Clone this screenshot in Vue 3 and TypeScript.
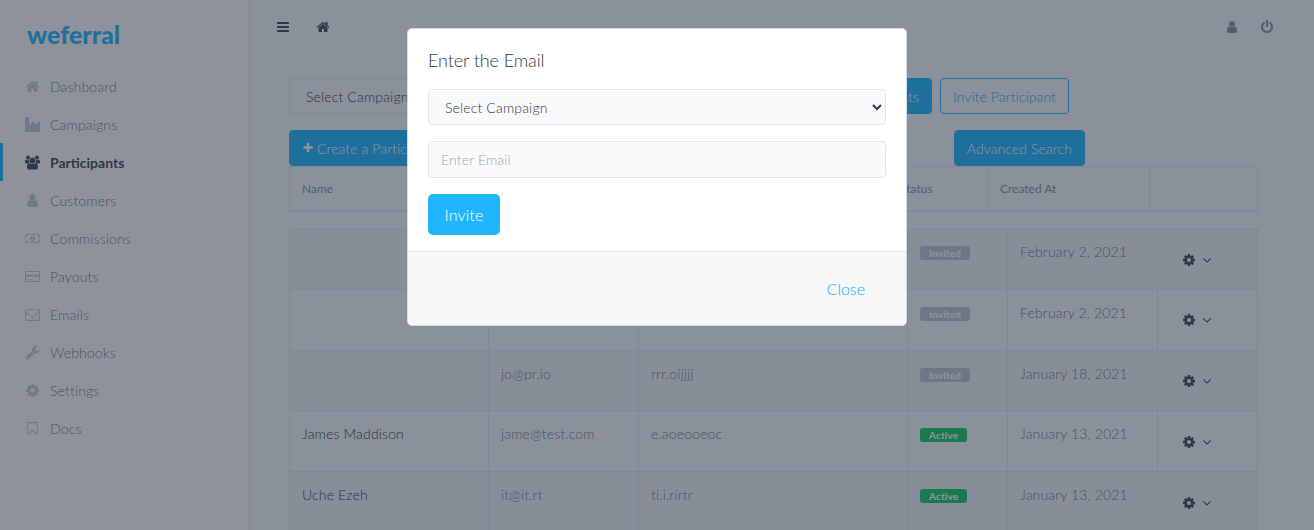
<script setup lang="ts">
const icons: Record<string, { box: string; d: string }> = {
  home: { box: '0 0 1792 1792', d: 'M1472 992v480q0 26-19 45t-45 19h-384v-384h-256v384h-384q-26 0-45-19t-19-45v-480q0-1 .5-3t.5-3l575-474 575 474q1 2 1 6zm223-69l-62 74q-8 9-21 11h-3q-13 0-21-7l-692-577-692 577q-12 8-24 7-13-2-21-11l-62-74q-8-10-7-23.500t11-21.500l719-599q32-26 76-26t76 26l244 204v-195q0-14 9-23t23-9h192q14 0 23 9t9 23v408l219 182q10 8 11 21.500t-7 23.500z' },
  industry: { box: '0 0 1792 1792', d: 'M448 0q26 0 45 19t19 45v891l536-429q17-14 40-14 26 0 45 19t19 45v379l536-429q17-14 40-14 26 0 45 19t19 45v1152q0 26-19 45t-45 19h-1664q-26 0-45-19t-19-45v-1664q0-26 19-45t45-19h384z' },
  users: { box: '0 0 1920 1792', d: 'M593 896q-162 5-265 128h-134q-82 0-138-40.500t-56-118.500q0-353 124-353 6 0 43.500 21t97.500 42.500 119 21.500q67 0 133-23-5 37-5 66 0 139 81 256zm1071 637q0 120-73 189.500t-194 69.500h-874q-121 0-194-69.500t-73-189.500q0-53 3.500-103.500t14-109 26.500-108.500 43-97.500 62-81 85.500-53.500 111.500-20q10 0 43 21.500t73 48 107 48 135 21.500 135-21.500 107-48 73-48 43-21.500q61 0 111.500 20t85.500 53.500 62 81 43 97.500 26.500 108.500 14 109 3.500 103.500zm-1024-1277q0 106-75 181t-181 75-181-75-75-181 75-181 181-75 181 75 75 181zm704 384q0 159-112.500 271.500t-271.500 112.500-271.500-112.500-112.500-271.500 112.500-271.500 271.500-112.500 271.500 112.500 112.500 271.500zm576 225q0 78-56 118.500t-138 40.500h-134q-103-123-265-128 81-117 81-256 0-29-5-66 66 23 133 23 59 0 119-21.500t97.500-42.500 43.500-21q124 0 124 353zm-128-609q0 106-75 181t-181 75-181-75-75-181 75-181 181-75 181 75 75 181z' },
  user: { box: '0 0 1792 1792', d: 'M1536 1399q0 109-62.500 187t-150.500 78h-854q-88 0-150.500-78t-62.500-187q0-85 8.500-160.500t31.500-152 58.500-131 94-89 134.500-34.500q131 128 313 128t313-128q76 0 134.500 34.500t94 89 58.500 131 31.500 152 8.500 160.500zm-256-887q0 159-112.500 271.500t-271.500 112.500-271.500-112.500-112.500-271.500 112.500-271.500 271.500-112.500 271.500 112.500 112.500 271.500z' },
  money: { box: '0 0 1920 1792', d: 'M160 320h1600q40 0 68 28t28 68v960q0 40-28 68t-68 28h-1600q-40 0-68-28t-28-68v-960q0-40 28-68t68-28zm160 128q0 106-75 181t-117 75v384q42 0 117 75t75 181h1280q0-106 75-181t117-75v-384q-42 0-117-75t-75-181zm640 96q133 0 226.500 103.500t93.500 248.500-93.500 248.500-226.500 103.500-226.500-103.500-93.500-248.500 93.500-248.500 226.500-103.500zm-128 160v64h64v256h-64v64h192v-64h-64v-320z' },
  card: { box: '0 0 1920 1792', d: 'M160 192h1600q66 0 113 47t47 113v1088q0 66-47 113t-113 47h-1600q-66 0-113-47t-47-113v-1088q0-66 47-113t113-47zm-32 480h1664v-320q0-13-9.500-22.500t-22.500-9.500h-1600q-13 0-22.500 9.500t-9.500 22.500zm0 224v544q0 13 9.500 22.500t22.500 9.500h1600q13 0 22.500-9.500t9.500-22.500v-544zm128 352h256v128h-256zm384 0h384v128h-384z' },
  envelope: { box: '0 0 1792 1792', d: 'M1664 1504v-768q-32 36-69 66-268 206-426 338-51 43-83 67t-86.500 48.500-102.500 24.500h-2q-48 0-102.500-24.500t-86.500-48.500-83-67q-158-132-426-338-37-30-69-66v768q0 13 9.500 22.500t22.500 9.500h1472q13 0 22.500-9.500t9.500-22.500zm0-1051v-24.500l-.5-13-3-12.500-5.500-9-9-7.500-14-2.500h-1472q-13 0-22.500 9.500t-9.500 22.500q0 168 147 284 193 152 401 317 6 5 35 29.500t46 37.500 44.500 31.500 50.500 27.500 43 9h2q20 0 43-9t50.500-27.500 44.500-31.500 46-37.500 35-29.500q208-165 401-317 54-43 100.500-115.500t46.500-131.500zm128-37v1088q0 66-47 113t-113 47h-1472q-66 0-113-47t-47-113v-1088q0-66 47-113t113-47h1472q66 0 113 47t47 113z' },
  wrench: { box: '0 0 1792 1792', d: 'M448 1472q0-26-19-45t-45-19-45 19-19 45 19 45 45 19 45-19 19-45zm644-420l-682 682q-37 37-90 37-52 0-91-37l-106-108q-38-36-38-90 0-53 38-91l681-681q39 98 114.500 173.500t173.500 114.500zm634-435q0 39-23 106-47 134-164.500 217.500t-258.500 83.500q-185 0-316.500-131.500t-131.500-316.500 131.500-316.500 316.500-131.500q58 0 121.500 16.500t107.500 46.500q16 11 16 28t-16 28l-293 169v224l193 107q5-3 79-48.500t135.500-81 70.500-35.500q15 0 23.500 10t8.500 25z' },
  cog: { box: '0 0 1792 1792', d: 'M1152 896q0-106-75-181t-181-75-181 75-75 181 75 181 181 75 181-75 75-181zm512-109v222q0 12-8 23t-20 13l-185 28q-19 54-39 91 35 50 107 138 10 12 10 25t-9 23q-27 37-99 108t-94 71q-12 0-26-9l-138-108q-44 23-91 38-16 136-29 186-7 28-36 28h-222q-14 0-24.500-8.500t-11.500-21.500l-28-184q-49-16-90-37l-141 107q-10 9-25 9-14 0-25-11-126-114-165-168-7-10-7-23 0-12 8-23 15-21 51-66.500t54-70.500q-27-50-41-99l-183-27q-13-2-21-12.500t-8-23.500v-222q0-12 8-23t19-13l186-28q14-46 39-92-40-57-107-138-10-12-10-24 0-10 9-23 26-36 98.500-107.500t94.500-71.500q13 0 26 10l138 107q44-23 91-38 16-136 29-186 7-28 36-28h222q14 0 24.500 8.500t11.500 21.500l28 184q49 16 90 37l142-107q9-9 24-9 13 0 25 10 129 119 165 170 7 8 7 22 0 12-8 23-15 21-51 66.500t-54 70.500q26 50 41 98l183 28q13 2 21 12.500t8 23.500z' },
  bookmark: { box: '0 0 1792 1792', d: 'M1408 256h-1024v1242l429-412 83-80 83 80 429 412zm12-128q23 0 44 9 33 13 52.500 41t19.500 62v1289q0 34-19.500 62t-52.500 41q-19 8-44 8-48 0-83-32l-441-424-441 424q-36 33-83 33-23 0-44-9-33-13-52.500-41t-19.500-62v-1289q0-34 19.500-62t52.500-41q21-9 44-9z' },
  bars: { box: '0 0 1792 1792', d: 'M1664 1344v128q0 26-19 45t-45 19h-1408q-26 0-45-19t-19-45v-128q0-26 19-45t45-19h1408q26 0 45 19t19 45zm0-512v128q0 26-19 45t-45 19h-1408q-26 0-45-19t-19-45v-128q0-26 19-45t45-19h1408q26 0 45 19t19 45zm0-512v128q0 26-19 45t-45 19h-1408q-26 0-45-19t-19-45v-128q0-26 19-45t45-19h1408q26 0 45 19t19 45z' },
  plus: { box: '0 0 1792 1792', d: 'M1600 736v192q0 40-28 68t-68 28h-416v416q0 40-28 68t-68 28h-192q-40 0-68-28t-28-68v-416h-416q-40 0-68-28t-28-68v-192q0-40 28-68t68-28h416v-416q0-40 28-68t68-28h192q40 0 68 28t28 68v416h416q40 0 68 28t28 68z' },
  power: { box: '0 0 1792 1792', d: 'M1664 896q0 156-61 298t-164 245-245 164-298 61-298-61-245-164-164-245-61-298q0-182 80.500-343t226.500-270q43-32 95.500-25t83.500 50q32 42 24.500 94.500t-49.500 84.500q-98 74-151.500 181t-53.500 228q0 104 40.500 198.500t109.500 163.500 163.500 109.500 198.500 40.500 198.500-40.500 163.500-109.500 109.500-163.500 40.500-198.500q0-121-53.500-228t-151.500-181q-42-32-49.500-84.500t24.500-94.500q31-43 84-50t95 25q146 109 226.500 270t80.500 343zm-640-768v640q0 52-38 90t-90 38-90-38-38-90v-640q0-52 38-90t90-38 90 38 38 90z' },
  angle: { box: '0 0 1792 1792', d: 'M1395 736q0 13-10 23l-466 466q-10 10-23 10t-23-10l-466-466q-10-10-10-23t10-23l50-50q10-10 23-10t23 10l393 393 393-393q10-10 23-10t23 10l50 50q10 10 10 23z' },
}

const nav = [
  { label: 'Dashboard', icon: 'home' },
  { label: 'Campaigns', icon: 'industry' },
  { label: 'Participants', icon: 'users', active: true },
  { label: 'Customers', icon: 'user' },
  { label: 'Commissions', icon: 'money' },
  { label: 'Payouts', icon: 'card' },
  { label: 'Emails', icon: 'envelope' },
  { label: 'Webhooks', icon: 'wrench' },
  { label: 'Settings', icon: 'cog' },
  { label: 'Docs', icon: 'bookmark' },
]

const rows = [
  { name: '', email: '', code: '', status: 'Invited', created: 'February 2, 2021' },
  { name: '', email: '', code: '', status: 'Invited', created: 'February 2, 2021' },
  { name: '', email: 'jo@pr.io', code: 'rrr.oijjjj', status: 'Invited', created: 'January 18, 2021' },
  { name: 'James Maddison', email: 'jame@test.com', code: 'e.aoeooeoc', status: 'Active', created: 'January 13, 2021' },
  { name: 'Uche Ezeh', email: 'it@it.rt', code: 'ti.i.rirtr', status: 'Active', created: 'January 13, 2021' },
]
</script>

<template>
  <div class="app">
    <aside class="sidebar">
      <div class="logo">weferral</div>
      <nav class="nav">
        <a v-for="item in nav" :key="item.label" class="nav-item" :class="{ active: item.active }">
          <span class="nav-icon">
            <svg :viewBox="icons[item.icon].box"><path :d="icons[item.icon].d" /></svg>
          </span>
          {{ item.label }}
        </a>
      </nav>
    </aside>

    <main class="main">
      <header class="topbar">
        <svg class="top-icon dark" :viewBox="icons.bars.box"><path :d="icons.bars.d" /></svg>
        <svg class="top-icon dark home" :viewBox="icons.home.box"><path :d="icons.home.d" /></svg>
        <svg class="top-icon muted push" :viewBox="icons.user.box"><path :d="icons.user.d" /></svg>
        <svg class="top-icon muted power" :viewBox="icons.power.box"><path :d="icons.power.d" /></svg>
      </header>

      <section class="content">
        <div class="toolbar first">
          <select class="filter"><option>Select Campaign</option></select>
          <div class="toolbar-actions">
            <button class="btn primary">Export Participants</button>
            <button class="btn outline">Invite Participant</button>
          </div>
        </div>
        <div class="toolbar second">
          <button class="btn primary">
            <svg class="plus" :viewBox="icons.plus.box"><path :d="icons.plus.d" /></svg>
            Create a Participant
          </button>
          <button class="btn primary">Advanced Search</button>
        </div>

        <table class="grid head">
          <colgroup>
            <col style="width: 199px" /><col style="width: 200px" /><col style="width: 199px" />
            <col style="width: 100px" /><col style="width: 162px" /><col />
          </colgroup>
          <thead>
            <tr>
              <th>Name</th><th>Email</th><th>Referral Code</th><th>Status</th><th>Created At</th><th></th>
            </tr>
          </thead>
        </table>

        <table class="grid body">
          <colgroup>
            <col style="width: 199px" /><col style="width: 150px" /><col style="width: 269px" />
            <col style="width: 100px" /><col style="width: 150px" /><col />
          </colgroup>
          <tbody>
            <tr v-for="(row, i) in rows" :key="i">
              <td class="name">{{ row.name }}</td>
              <td>{{ row.email }}</td>
              <td>{{ row.code }}</td>
              <td>
                <span class="badge" :class="row.status.toLowerCase()">{{ row.status }}</span>
              </td>
              <td>{{ row.created }}</td>
              <td class="actions">
                <svg class="cog" :viewBox="icons.cog.box"><path :d="icons.cog.d" /></svg>
                <svg class="caret" :viewBox="icons.angle.box"><path :d="icons.angle.d" /></svg>
              </td>
            </tr>
          </tbody>
        </table>
      </section>
    </main>

    <div class="backdrop"></div>
    <div class="modal-wrap">
      <div class="modal" role="dialog" aria-modal="true">
        <div class="modal-body">
          <h3>Enter the Email</h3>
          <select class="field select"><option>Select Campaign</option></select>
          <input class="field input" type="text" placeholder="Enter Email" />
          <button class="invite">Invite</button>
        </div>
        <div class="modal-foot">
          <a class="close">Close</a>
        </div>
      </div>
    </div>
  </div>
</template>

<style scoped>
.app {
  display: flex;
  height: 530px;
  overflow: hidden;
  font-family: Lato, "Open Sans", sans-serif;
  font-size: 14px;
  font-weight: 300;
  letter-spacing: 0.15px;
  color: #2f3a48;
}
.sidebar {
  width: 249px;
  flex: none;
  background: #fff;
  border-right: 1px solid #e0e6ed;
  box-sizing: content-box;
}
.logo {
  padding: 16px 27px 0;
  height: 53px;
  box-sizing: border-box;
  font-size: 25px;
  line-height: 36px;
  font-weight: 900;
  letter-spacing: 0;
  color: #1fb6ff;
}
.nav { padding-top: 14px; }
.nav-item {
  display: flex;
  align-items: center;
  gap: 10px;
  height: 38px;
  padding-left: 25px;
  color: #6f7d92;
}
.nav-item.active {
  color: #3c4858;
  font-weight: 700;
  letter-spacing: 0;
  box-shadow: inset 3px 0 0 #1fb6ff;
}
.nav-icon {
  width: 15px;
  height: 15px;
  display: flex;
  align-items: center;
  justify-content: center;
}
.nav-icon svg { width: 15px; height: 15px; fill: #c0ccda; flex: none; }
.nav-item.active .nav-icon svg { fill: #3c4858; }

.main {
  flex: 1;
  min-width: 0;
  background: #f9fafc;
}
.topbar {
  display: flex;
  align-items: center;
  height: 54px;
  padding: 0 40px 0 26px;
}
.top-icon { width: 14px; height: 14px; }
.top-icon.dark { fill: #3c4858; }
.top-icon.muted { fill: #8492a6; }
.home { margin-left: 26px; }
.push { margin-left: auto; }
.power { margin-left: 21px; }

.content { padding: 24px 56px 0 39px; }
.toolbar { display: flex; justify-content: space-between; }
.toolbar.first { padding-right: 189px; margin-bottom: 16px; }
.toolbar.second { padding-right: 173px; }
.toolbar-actions { display: flex; gap: 8px; }
.filter {
  width: 250px;
  height: 36px;
  padding: 0 12px;
  background: #f9fafc;
  border: 1px solid #e0e6ed;
  border-radius: 4px;
  font: inherit;
  letter-spacing: inherit;
  color: #2f3a48;
}
.btn {
  height: 36px;
  padding: 0 12px;
  border: 1px solid #1fb6ff;
  border-radius: 4px;
  font: inherit;
  letter-spacing: 0.1px;
  display: flex;
  align-items: center;
  gap: 3px;
}
.btn.primary { background: #1fb6ff; color: #fff; }
.btn.outline { background: transparent; color: #10aeff; }
.plus { width: 12px; height: 12px; fill: #fff; }

.grid {
  width: 969px;
  table-layout: fixed;
  border-collapse: collapse;
}
.grid th, .grid td {
  border: 1px solid #e5e9f2;
  text-align: left;
  padding: 0 12px;
}
.head th {
  height: 43px;
  font-size: 12px;
  font-weight: 400;
  letter-spacing: 0;
  color: #8492a6;
  border-bottom-width: 2px;
}
.body { margin-top: 16px; }
.body td {
  height: 60.8px;
  box-sizing: border-box;
  vertical-align: top;
  padding-top: 14px;
  color: #6f7d92;
}
.body tr:nth-child(odd) td { background: rgba(0, 0, 0, 0.025); }
.body td.name { color: #2f3a48; }
.body td.actions { vertical-align: middle; padding: 0 0 2px 24px; }
.badge {
  display: inline-block;
  padding: 0 9px;
  height: 14px;
  line-height: 14px;
  font-size: 10px;
  font-weight: 700;
  border-radius: 3px;
  color: #fff;
  vertical-align: top;
  margin-top: 3px;
}
.badge.invited { background: #bfc7d3; }
.badge.active { background: #13ce66; }
.cog { width: 14px; height: 14px; fill: #3c4858; vertical-align: middle; }
.caret { width: 14px; height: 14px; fill: #3c4858; vertical-align: middle; margin-left: 4px; }

.backdrop {
  position: fixed;
  inset: 0;
  background: rgba(30, 40, 56, 0.5);
}
.modal-wrap {
  position: fixed;
  inset: 0;
  display: flex;
  justify-content: center;
  align-items: flex-start;
  padding-top: 28px;
}
.modal {
  width: 500px;
  box-sizing: border-box;
  background: #fff;
  border: 1px solid #d3dce6;
  border-radius: 5px;
  overflow: hidden;
}
.modal-body { padding: 20px; height: 222px; box-sizing: border-box; }
h3 {
  margin: 0 0 16px;
  font-size: 18px;
  line-height: 24px;
  font-weight: 300;
  letter-spacing: -0.1px;
  color: #2f3a48;
  transform: translateY(-1px);
}
.field {
  display: block;
  width: 100%;
  box-sizing: border-box;
  background: #f9fafc;
  border: 1px solid #e0e6ed;
  border-radius: 4px;
  font: inherit;
  letter-spacing: inherit;
  padding: 0 12px;
  color: #2f3a48;
}
.select { height: 36px; margin-bottom: 16px; }
.input { height: 37px; margin-bottom: 16px; }
.input::placeholder { color: #97a4b5; }
.invite {
  display: block;
  width: 72px;
  height: 41px;
  background: #1fb6ff;
  border: 0;
  border-radius: 5px;
  color: #fff;
  font: inherit;
  font-size: 16px;
  letter-spacing: inherit;
}
.modal-foot {
  height: 74px;
  box-sizing: border-box;
  background: #f7f7f7;
  border-top: 1px solid #e0e6ed;
  display: flex;
  align-items: center;
  justify-content: flex-end;
  padding-right: 41px;
}
.close { color: #10aeff; font-size: 16px; letter-spacing: 0; }
</style>

<style>
html, body { overflow: hidden; }
</style>
